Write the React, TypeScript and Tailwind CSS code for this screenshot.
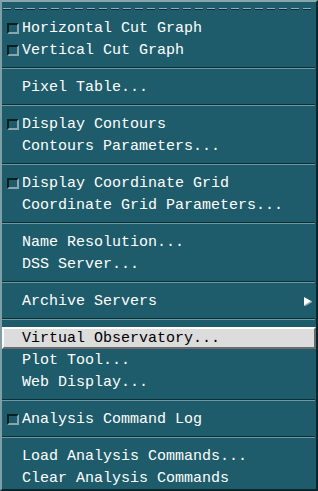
import React from "react";

type Entry =
  | { kind: "item"; label: string; check?: boolean; active?: boolean; sub?: boolean }
  | { kind: "sep" };

const entries: Entry[] = [
  { kind: "item", label: "Horizontal Cut Graph", check: true },
  { kind: "item", label: "Vertical Cut Graph", check: true },
  { kind: "sep" },
  { kind: "item", label: "Pixel Table..." },
  { kind: "sep" },
  { kind: "item", label: "Display Contours", check: true },
  { kind: "item", label: "Contours Parameters..." },
  { kind: "sep" },
  { kind: "item", label: "Display Coordinate Grid", check: true },
  { kind: "item", label: "Coordinate Grid Parameters..." },
  { kind: "sep" },
  { kind: "item", label: "Name Resolution..." },
  { kind: "item", label: "DSS Server..." },
  { kind: "sep" },
  { kind: "item", label: "Archive Servers", sub: true },
  { kind: "sep" },
  { kind: "item", label: "Virtual Observatory...", active: true },
  { kind: "item", label: "Plot Tool..." },
  { kind: "item", label: "Web Display..." },
  { kind: "sep" },
  { kind: "item", label: "Analysis Command Log", check: true },
  { kind: "sep" },
  { kind: "item", label: "Load Analysis Commands..." },
  { kind: "item", label: "Clear Analysis Commands" },
];

function CheckBox() {
  return (
    <span className="ml-[5px] mr-[3px] box-border h-[11px] w-[12px] shrink-0 border-2 border-t-[#071e23] border-l-[#071e23] border-b-[#8aa6ac] border-r-[#8aa6ac] bg-[#1e5c6b]" />
  );
}

function SubArrow() {
  return (
    <svg className="absolute right-[4px] top-[7px]" width="8" height="9" viewBox="0 0 8 9">
      <polygon points="0,0 8,4.5 0,9" fill="#ffffff" />
      <polyline points="0,9 8,4.5" stroke="#9aa8ab" strokeWidth="1.5" fill="none" />
    </svg>
  );
}

export default function App() {
  return (
    <div
      className="box-border h-[491px] w-[318px] overflow-hidden border-2 border-t-[#89a6ac] border-l-[#7f9ea5] border-r-[#08262c] border-b-[#08262c] bg-[#1e5c6b] text-[15px] leading-none"
      style={{ fontFamily: '"Liberation Mono", "DejaVu Sans Mono", monospace' }}
    >
      {/* tear-off line */}
      <div className="h-[15px] pl-[1px] pt-[6px]">
        <svg width="310" height="2" viewBox="0 0 310 2">
          <line x1="0" y1="0.5" x2="310" y2="0.5" stroke="#8fb0b7" strokeDasharray="8 4" />
          <line x1="0" y1="1.5" x2="310" y2="1.5" stroke="#0b2d34" strokeDasharray="8 4" />
        </svg>
      </div>

      {entries.map((e, i) =>
        e.kind === "sep" ? (
          <div key={i} className="h-[15px] pr-[1px] pt-[6px]">
            <div className="h-px bg-[#0a2f37]" />
            <div className="h-px bg-[#6f98a1]" />
          </div>
        ) : (
          <div
            key={i}
            className={
              e.active
                ? "relative box-border flex h-[22px] items-center border-2 border-t-white border-l-white border-b-[#6b6b6b] border-r-[#6b6b6b] bg-[#dcdcdc] pl-[18px] pt-px text-black"
                : "relative flex h-[22px] items-center pt-px text-white " + (e.check ? "" : "pl-[20px]")
            }
          >
            {e.check && <CheckBox />}
            <span className="whitespace-pre">{e.label}</span>
            {e.sub && <SubArrow />}
          </div>
        )
      )}
    </div>
  );
}
